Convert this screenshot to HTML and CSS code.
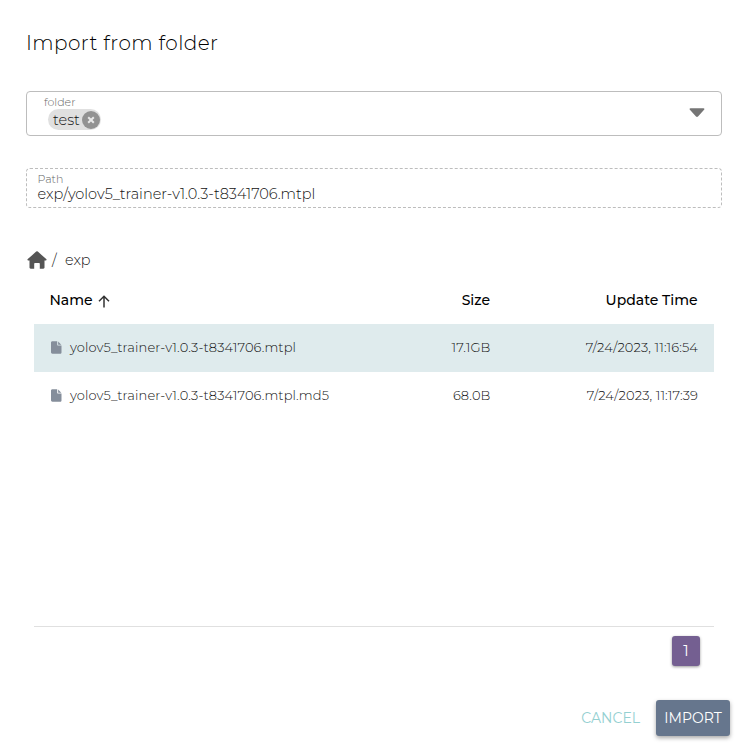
FILE: index.html
```html
<!DOCTYPE html>
<html lang="en">
<head>
<meta charset="utf-8">
<title>Import from folder</title>
<link rel="stylesheet" href="styles.css">
</head>
<body>
<main class="dialog">
  <h1 class="title">Import from folder</h1>
  <div class="select">
    <div>
      <div class="label">folder</div>
      <div class="chip"><span class="chip-text">test</span><svg class="chip-x" viewBox="0 0 18 18"><circle cx="9" cy="9" r="9"/><path d="M6.200 6.200l5.600 5.600M11.800 6.200l-5.600 5.600"/></svg></div>
    </div>
    <svg class="caret" viewBox="0 0 16 10"><path d="M1.500.3h13c1 0 1.200.8.6 1.400L9 8.500c-.6.6-1.400.6-2 0L.9 1.700C.3 1.100.5.3 1.500.3z"/></svg>
  </div>
  <div class="path">
    <div class="label">Path</div>
    <div class="path-value">exp/yolov5_trainer-v1.0.3-t8341706.mtpl</div>
  </div>
  <nav class="crumbs">
    <svg class="home" viewBox="0 0 20 18"><path d="M9.200.6a1.200 1.200 0 0 1 1.600 0l8.400 7.500c.7.6.4 1.500-.5 1.500h-1.200v6.900c0 .7-.5 1.200-1.200 1.200h-3.500v-4.700c0-.7-.4-1-1-1H8.200c-.6 0-1 .3-1 1v4.700H3.700c-.7 0-1.200-.5-1.200-1.200V9.600H1.300C.4 9.600.1 8.700.8 8.100z"/></svg>
    <span class="slash">/</span><span class="crumb">exp</span>
  </nav>
  <table class="files">
    <thead><tr>
      <th class="c-name">Name<svg class="sort" viewBox="0 0 12 13"><path d="M6 12.500V1.500M1 6.300l5-5 5 5"/></svg></th>
      <th class="c-size">Size</th><th class="c-time">Update Time</th>
    </tr></thead>
    <tbody>
      <tr class="selected">
        <td class="c-name"><svg class="file" viewBox="0 0 11 13"><path d="M1.500 0H6.500v3.500c0 .6.400 1 1 1h3.500v7.200c0 .8-.6 1.300-1.300 1.300H1.500C.6 13 0 12.400 0 11.600V1.400C0 .6.600 0 1.500 0zM7.500.2L10.800 3.500H7.500z"/></svg>yolov5_trainer-v1.0.3-t8341706.mtpl</td>
        <td class="c-size">17.1GB</td><td class="c-time">7/24/2023, 11:16:54</td>
      </tr>
      <tr>
        <td class="c-name"><svg class="file" viewBox="0 0 11 13"><path d="M1.500 0H6.500v3.500c0 .6.400 1 1 1h3.500v7.200c0 .8-.6 1.300-1.300 1.300H1.500C.6 13 0 12.400 0 11.600V1.400C0 .6.600 0 1.500 0zM7.500.2L10.800 3.500H7.500z"/></svg>yolov5_trainer-v1.0.3-t8341706.mtpl.md5</td>
        <td class="c-size">68.0B</td><td class="c-time">7/24/2023, 11:17:39</td>
      </tr>
    </tbody>
  </table>
  <div class="pager"><button class="page">1</button></div>
  <footer class="actions"><button class="cancel">CANCEL</button><button class="import">IMPORT</button></footer>
</main>
</body>
</html>
```
FILE: styles.css
```css
* { box-sizing: border-box; }
body { margin: 0; background: #fff; color: #111; font-family: Montserrat, Inter, "Open Sans", sans-serif; font-weight: 300; }
svg { display: block; flex: none; }
button { border: 0; padding: 0; font: inherit; }
.dialog { width: 745px; height: 747px; padding: 26px 15px 0 26px; display: flex; flex-direction: column; overflow: hidden; }
.title { margin: 0; height: 34px; line-height: 34px; font-size: 20px; font-weight: 300; letter-spacing: .43px; color: #000; }
.select { margin: 31px 8px 0 0; height: 45px; border: 1px solid #bdbdbd; border-radius: 4px; padding: 4px 16px 0 17px; display: flex; justify-content: space-between; }
.label { font-size: 11px; line-height: 13px; color: #666; }
.chip { margin-left: 4px; width: 53px; height: 21px; border-radius: 11px; background: #e0e0e0; display: flex; align-items: center; justify-content: space-between; padding: 0 1px 0 5px; font-size: 14.500px; line-height: 20px; }
.chip-text { padding-top: 1px; }
.chip-x { width: 18px; height: 18px; fill: #929292; stroke: none; }
.chip-x path { stroke: #e8e8e8; stroke-width: 2; }
.caret { width: 16px; height: 10px; margin-top: 12px; fill: #757575; }
.path { margin: 32px 8px 0 0; height: 40px; border: 1px dashed #bdbdbd; border-radius: 4px; padding: 4px 10.500px 0; }
.path-value { font-size: 14.500px; line-height: 16px; white-space: nowrap; }
.crumbs { margin-top: 42px; height: 20px; display: flex; align-items: center; font-size: 14.400px; }
.home { width: 20px; height: 18px; margin-left: 1px; fill: #555; }
.slash { width: 18px; padding-left: 5px; }
.files { margin: 6px 0 0 8px; width: 680px; table-layout: fixed; border-collapse: collapse; font-size: 13px; }
.files tr { height: 48px; }
.files th, .files td { padding: 0 16px 2px; text-align: right; white-space: nowrap; }
.files td { letter-spacing: .12px; }
.files th { padding: 0 16.500px 0 15.500px; font-size: 14px; font-weight: 500; color: #000; }
.files .c-name { width: 300px; text-align: left; }
.files td.c-name { padding-bottom: 3px; }
.c-size { width: 172.500px; }
.c-time { width: 207.500px; }
.c-name svg { display: inline-block; vertical-align: middle; }
.sort { width: 12px; height: 13px; margin-left: 5px; fill: none; stroke: #333; stroke-width: 1.500; }
.file { width: 10.500px; height: 13px; margin: -1px 8.500px 0 1px; fill: #858e9b; }
.selected { background: #dfebed; }
.pager { margin: 206px 0 0 8px; width: 680px; height: 40px; border-top: 1px solid #e0e0e0; display: flex; justify-content: flex-end; padding: 9px 14px 0 0; }
.page { width: 28px; height: 30px; padding-bottom: 2px; border-radius: 3px; background: #745f91; color: #fff; font-size: 15px; font-weight: 400; box-shadow: 0 1px 3px rgba(0,0,0,.4); }
.actions { margin-top: 34px; display: flex; justify-content: flex-end; height: 36px; font-size: 14px; font-weight: 400; }
.cancel { background: none; color: #94d0d1; margin-right: 16px; }
.import { width: 74px; border-radius: 3px; background: #66768d; color: #fff; box-shadow: 0 2px 4px rgba(0,0,0,.35); }
```
